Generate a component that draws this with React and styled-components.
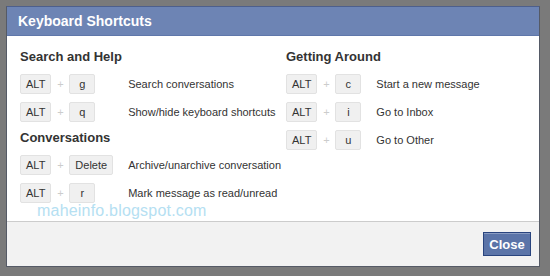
import React from "react";
import styled, { createGlobalStyle } from "styled-components";

const Global = createGlobalStyle`
  html, body { margin: 0; padding: 0; }
  body {
    width: 550px;
    height: 276px;
    overflow: hidden;
    background: #7a7a7a;
    font-family: "Liberation Sans", Arial, sans-serif;
  }
`;

const Frame = styled.div`
  box-sizing: border-box;
  width: 550px;
  height: 276px;
  padding: 6px 10px 9px 6px;
`;

const Dialog = styled.div`
  position: relative;
  box-sizing: border-box;
  height: 100%;
  display: flex;
  flex-direction: column;
  background: #fff;
  border: 1px solid #555a66;
  border-top-color: #4d5f8c;
`;

const Header = styled.div`
  height: 28px;
  background: #6d84b4;
  border-bottom: 1px solid #5f77aa;
  color: #fff;
  font-weight: bold;
  font-size: 14px;
  line-height: 28px;
  padding-left: 11px;
`;

const Body = styled.div`
  flex: 1;
  display: grid;
  grid-template-columns: 266px 1fr;
  padding: 13px 0 0 13px;
  align-items: start;
`;

const Column = styled.div`
  display: grid;
  grid-template-columns: auto 1fr;
  row-gap: 8px;
  align-items: center;
`;

const Heading = styled.div`
  grid-column: 1 / -1;
  font-weight: bold;
  font-size: 13px;
  line-height: 16px;
  color: #333;
  margin-bottom: 1px;
`;

const Keys = styled.div`
  display: flex;
  align-items: center;
  padding-right: 15px;
`;

const Key = styled.span`
  box-sizing: border-box;
  min-width: 26px;
  height: 20px;
  padding: 0 5px;
  background: #f0f0f0;
  border: 1px solid #e2e2e2;
  border-radius: 2px;
  font-size: 11px;
  line-height: 18px;
  color: #333;
  text-align: center;
`;

const Plus = styled.span`
  width: 18px;
  text-align: center;
  color: #cccccc;
  font-size: 11px;
`;

const Desc = styled.span`
  font-size: 11px;
  color: #333;
  white-space: nowrap;
`;

const Watermark = styled.div`
  position: absolute;
  left: 30px;
  top: 195px;
  font-size: 16px;
  color: #b5e0f2;
  letter-spacing: 0.2px;
  pointer-events: none;
`;

const Footer = styled.div`
  height: 45px;
  box-sizing: border-box;
  background: #f2f2f2;
  border-top: 1px solid #cccccc;
  display: flex;
  justify-content: flex-end;
  align-items: flex-start;
  padding: 10px 8px 0 0;
`;

const Button = styled.button`
  box-sizing: border-box;
  width: 48px;
  height: 24px;
  background: #5b74a8;
  border: 1px solid #29447e;
  box-shadow: inset 0 1px 0 #8a9cc2;
  color: #fff;
  font-family: "Liberation Sans", Arial, sans-serif;
  font-weight: bold;
  font-size: 13px;
  padding: 0;
`;

const left = [
  {
    title: "Search and Help",
    rows: [
      ["g", "Search conversations"],
      ["q", "Show/hide keyboard shortcuts"],
    ],
  },
  {
    title: "Conversations",
    rows: [
      ["Delete", "Archive/unarchive conversation"],
      ["r", "Mark message as read/unread"],
    ],
  },
];

const right = [
  {
    title: "Getting Around",
    rows: [
      ["c", "Start a new message"],
      ["i", "Go to Inbox"],
      ["u", "Go to Other"],
    ],
  },
];

function Sections({ sections }) {
  return (
    <Column>
      {sections.map((s) => (
        <React.Fragment key={s.title}>
          <Heading>{s.title}</Heading>
          {s.rows.map(([k, d]) => (
            <React.Fragment key={k}>
              <Keys>
                <Key>ALT</Key>
                <Plus>+</Plus>
                <Key>{k}</Key>
              </Keys>
              <Desc>{d}</Desc>
            </React.Fragment>
          ))}
        </React.Fragment>
      ))}
    </Column>
  );
}

export default function App() {
  return (
    <>
      <Global />
      <Frame>
        <Dialog>
          <Header>Keyboard Shortcuts</Header>
          <Body>
            <Sections sections={left} />
            <Sections sections={right} />
          </Body>
          <Footer>
            <Button>Close</Button>
          </Footer>
          <Watermark>maheinfo.blogspot.com</Watermark>
        </Dialog>
      </Frame>
    </>
  );
}
